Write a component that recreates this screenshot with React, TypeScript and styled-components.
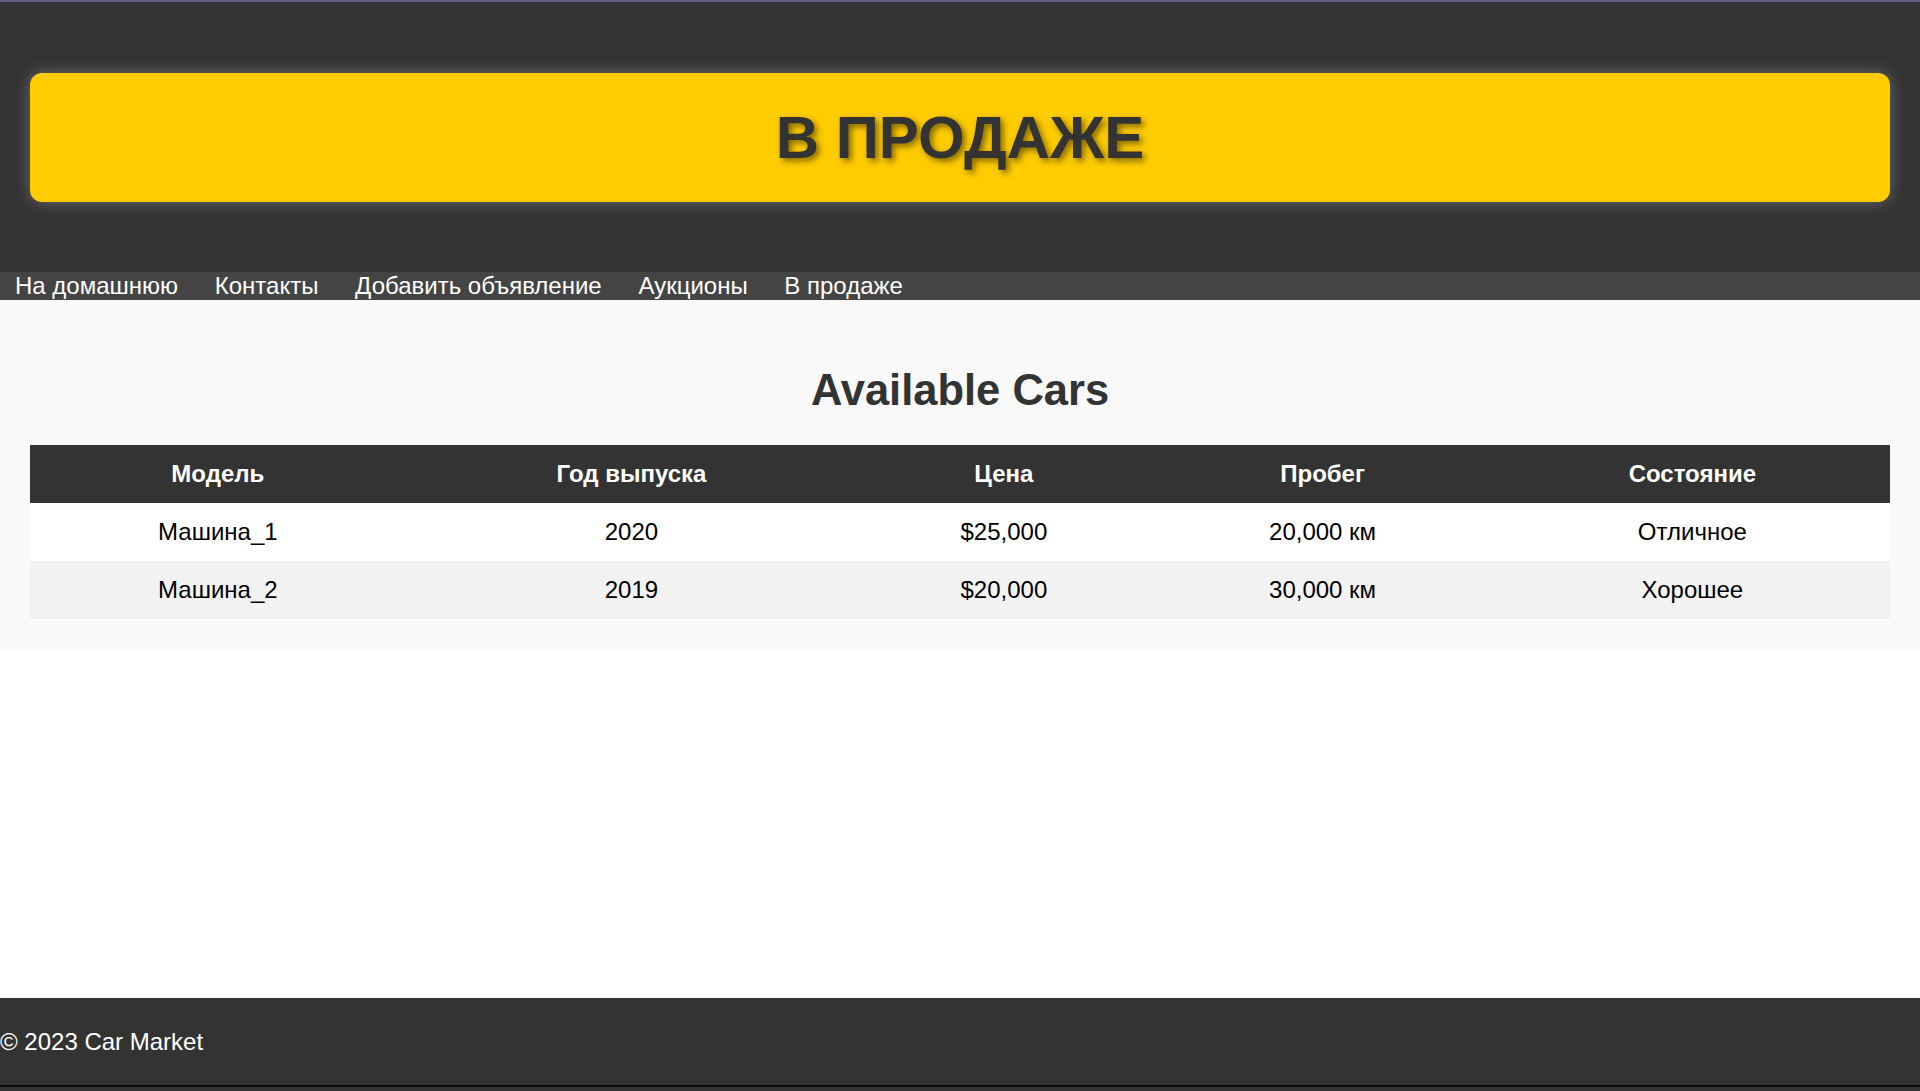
import React from "react";
import styled, { createGlobalStyle } from "styled-components";

const GlobalStyle = createGlobalStyle`
  html, body {
    margin: 0;
    padding: 0;
    background: #ffffff;
    font-family: "Liberation Sans", Arial, sans-serif;
  }
  * { box-sizing: border-box; }
`;

const Shell = styled.div`
  min-height: 100vh;
  display: flex;
  flex-direction: column;
`;

const Header = styled.header`
  background: #333333;
  border-top: 2px solid #5e5f86;
  padding: 71px 30px 70px;
`;

const Banner = styled.div`
  background: #ffcc00;
  border-radius: 12px;
  padding: 30px;
  box-shadow: 0 0 16px rgba(255, 255, 255, 0.28);
  text-align: center;
`;

const BannerTitle = styled.h1`
  margin: 0;
  font-size: 60px;
  line-height: 69px;
  font-weight: 700;
  color: #333333;
  text-shadow: 3px 3px 6px rgba(0, 0, 0, 0.5);
`;

const Nav = styled.nav`
  background: #444444;
  display: flex;
  gap: 6.7px;
`;

const NavLink = styled.a`
  color: #ffffff;
  text-decoration: none;
  font-size: 24px;
  line-height: 27.6px;
  padding: 0 15px;
`;

const Main = styled.main`
  background: #f9f9f9;
  padding: 27px 30px 31px;
`;

const Title = styled.h2`
  margin: 39px 0 31px;
  text-align: center;
  font-size: 43.5px;
  line-height: 48px;
  font-weight: 700;
  color: #333333;
`;

const Table = styled.table`
  width: 100%;
  border-collapse: collapse;
  font-size: 24px;
`;

const HeadCell = styled.th`
  background: #333333;
  color: #ffffff;
  font-weight: 700;
  padding: 15px;
  line-height: 28px;
  text-align: center;
`;

const Row = styled.tr<{ $alt?: boolean }>`
  background: ${(p) => (p.$alt ? "#f2f2f2" : "#ffffff")};
`;

const Cell = styled.td`
  color: #000000;
  padding: 15px;
  line-height: 28px;
  text-align: center;
`;

const Spacer = styled.div`
  flex: 1;
`;

const Footer = styled.footer`
  background: #333333;
  color: #ffffff;
  font-size: 24px;
  line-height: 27.6px;
  padding: 30px 0 29px;
  border-bottom: 2px solid #0b0b0b;
`;

const BottomEdge = styled.div`
  height: 4px;
  background: #333333;
`;

const links = ["На домашнюю", "Контакты", "Добавить объявление", "Аукционы", "В продаже"];
const columns = ["Модель", "Год выпуска", "Цена", "Пробег", "Состояние"];
const cars = [
  ["Машина_1", "2020", "$25,000", "20,000 км", "Отличное"],
  ["Машина_2", "2019", "$20,000", "30,000 км", "Хорошее"],
];

export default function App() {
  return (
    <Shell>
      <GlobalStyle />
      <Header>
        <Banner>
          <BannerTitle>В ПРОДАЖЕ</BannerTitle>
        </Banner>
      </Header>
      <Nav>
        {links.map((l) => (
          <NavLink key={l} href="#">
            {l}
          </NavLink>
        ))}
      </Nav>
      <Main>
        <Title>Available Cars</Title>
        <Table>
          <thead>
            <tr>
              {columns.map((c) => (
                <HeadCell key={c}>{c}</HeadCell>
              ))}
            </tr>
          </thead>
          <tbody>
            {cars.map((car, i) => (
              <Row key={car[0]} $alt={i % 2 === 1}>
                {car.map((v, j) => (
                  <Cell key={j}>{v}</Cell>
                ))}
              </Row>
            ))}
          </tbody>
        </Table>
      </Main>
      <Spacer />
      <Footer>© 2023 Car Market</Footer>
      <BottomEdge />
    </Shell>
  );
}
